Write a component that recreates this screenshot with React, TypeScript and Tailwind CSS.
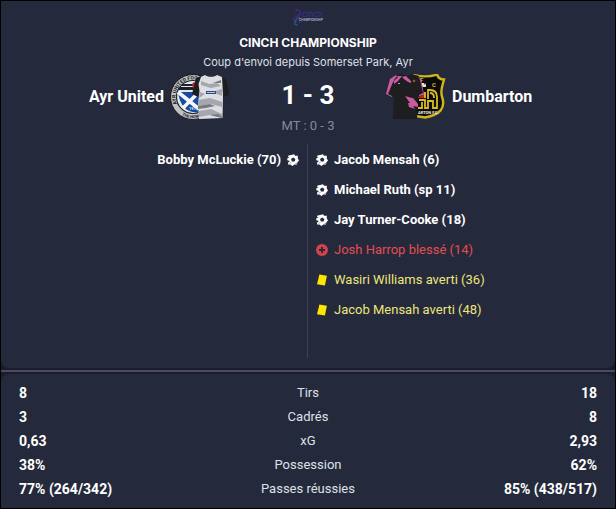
import React from 'react';

type EventKind = 'goal' | 'injury' | 'booking';

interface MatchEvent {
  kind: EventKind;
  label: string;
}

const homeEvents: MatchEvent[] = [{ kind: 'goal', label: 'Bobby McLuckie (70)' }];

const awayEvents: MatchEvent[] = [
  { kind: 'goal', label: 'Jacob Mensah (6)' },
  { kind: 'goal', label: 'Michael Ruth (sp 11)' },
  { kind: 'goal', label: 'Jay Turner-Cooke (18)' },
  { kind: 'injury', label: 'Josh Harrop blessé (14)' },
  { kind: 'booking', label: 'Wasiri Williams averti (36)' },
  { kind: 'booking', label: 'Jacob Mensah averti (48)' },
];

const stats = [
  { label: 'Tirs', home: '8', away: '18' },
  { label: 'Cadrés', home: '3', away: '8' },
  { label: 'xG', home: '0,63', away: '2,93' },
  { label: 'Possession', home: '38%', away: '62%' },
  { label: 'Passes réussies', home: '77% (264/342)', away: '85% (438/517)' },
];

const eventStyles: Record<EventKind, string> = {
  goal: 'font-bold text-white',
  injury: 'text-[#e84c52]',
  booking: 'text-[#ece67c]',
};

const EventIcon: React.FC<{ kind: EventKind }> = ({ kind }) => {
  if (kind === 'goal') {
    return (
      <svg viewBox="0 0 12 12" className="size-3 shrink-0" aria-hidden="true">
        <path
          fill="#fff"
          d="M4.2 1 7 .3 8 1.8 10.8 1.8 10.8 4.5 12 6.5 10.3 8.5 10 10.5 7.3 10.6 5.5 12 3.3 10.6 1 10.5 1.3 8.3 3 7 .3 6.2.3 4.3 2.6 3.6 1 3 1.5 1.5Z"
        />
        <path fill="#24293b" d="M6.2 3.4 8.4 5 7.6 7.6H4.9L4 5Z" />
        <path stroke="#24293b" strokeWidth=".8" d="M3 9.4 4 8.4M8.8 9.9 9.8 8.9" />
      </svg>
    );
  }
  if (kind === 'injury') {
    return (
      <svg viewBox="0 0 12 12" className="size-3 shrink-0" aria-hidden="true">
        <circle cx="6" cy="6" r="6" fill="#d2444a" />
        <path stroke="#24293b" strokeWidth="1.8" d="M6 3v6M3 6h6" />
      </svg>
    );
  }
  return (
    <svg viewBox="0 0 12 12" className="size-3 shrink-0" aria-hidden="true">
      <path fill="#ffe600" d="M3.4.6 10.9 1.7 8.9 11.5 1 10.3Z" />
    </svg>
  );
};

const LeagueLogo = () => (
  <svg viewBox="0 0 34 18" className="h-[18px] w-[34px]" role="img" aria-label="cinch Championship">
    <path fill="none" stroke="#43277f" strokeWidth="1.6" d="M4 2C7-.5 10 2 9 5 7 8 3 8 2 10.5" />
    <path fill="none" stroke="#3b2a72" strokeWidth="1.2" d="M1.5 10c2 4 6 2 9.5 3.5" />
    <path fill="none" stroke="#206478" strokeWidth="1.2" d="M9 8C6 9 3 12 4 15.5l3 .5" />
    <text x="11" y="8" fontSize="8" className="fill-[#43309a]">cinch</text>
    <text x="8" y="12" fontSize="3" className="fill-[#a3a9c6] font-bold">CHAMPIONSHIP</text>
  </svg>
);

const AyrUnitedBadge = () => (
  <svg viewBox="0 0 60 45" className="h-[45px] w-[60px] shrink-0" role="img" aria-label="Ayr United">
    <defs>
      <path id="ayr-top" d="M7 30A17.5 17.5 0 1 1 40.500 22" />
      <path id="ayr-bottom" d="M12 41A22 22 0 0 0 36 40" />
    </defs>
    <circle cx="23" cy="23" r="22.5" fill="#bfc1c3" stroke="#15171c" />
    <circle cx="23" cy="23" r="16.5" fill="#e6e7e8" stroke="#22252b" strokeWidth="1.2" />
    <text fontSize="5" className="fill-[#16181d] font-bold">
      <textPath href="#ayr-top">AYR UNITED FOOTBALL</textPath>
    </text>
    <text fontSize="4" className="fill-[#16181d] font-bold">
      <textPath href="#ayr-bottom">THE HONEST</textPath>
    </text>
    <path fill="#202126" d="M12 10h14v2H11zM9 13h16v3H8z" />
    <path fill="#b92330" d="m22 10 2-2 3 2v4h-4z" />
    <path fill="#174aa0" d="M8 18h22v20c-12 2-20-5-22-20Z" />
    <path stroke="#f4f7fb" strokeWidth="3.6" d="M8 18 29 35M29 18 13 34" />
    <text x="19" y="36" fontSize="4" className="fill-[#dce6f5] font-bold">1910</text>
    <path fill="#1d1e22" d="M31 2 26 4 22 20l6 3 5-9ZM49 2l7 3 3.500 16L52 23l-3-10Z" />
    <path fill="#dcdee2" d="m31 3 4-2c3 2 9 2 12 0l5 2 1 18-.5 23L29 45l-1-14 1.5-14-1-7Z" />
    <path
      fill="#a4a7ac"
      d="m31 7 8 3 8-1 4 3-10 2-10-3ZM28 26l12-2 12 4v5l-11-3-13 2ZM42 18l10-3v7ZM29 37l12-2 11 5v4l-12-3-11 2ZM30 18l5 2-6 4Z"
    />
    <path fill="#777b81" d="m28 32 12-2 5 2-9 2-8 1ZM43 9l8-3v3ZM40 41l8-1 4 3v1Z" />
    <path fill="#2c2e33" d="M35 .5h12c-3 3-9 3-12 0Z" />
    <path fill="#27498f" d="M36 17h10v3H36z" />
    <path fill="#c5c7ca" d="M37 18h8v1h-8z" />
  </svg>
);

const DumbartonBadge = () => (
  <svg viewBox="0 0 60 45" className="h-[45px] w-[60px] shrink-0" role="img" aria-label="Dumbarton">
    <path
      fill="#0b0b0b"
      stroke="#cdb51b"
      strokeWidth="2.4"
      d="M28 1c8 2 15 2 23-.5 1 3 4 5 7 5-2 8-4 11-2 17 4 12-2 18-17 21l-13-2Z"
    />
    <text x="34" y="8" fontSize="6" className="fill-[#d5bd27] font-bold">F</text>
    <text x="46" y="13" fontSize="6" className="fill-[#d5bd27] font-bold">C</text>
    <path fill="#e5e2d4" d="M36 9h2l1 2 1-2v4h-4z" />
    <path fill="#b9212d" d="M32 18h8v6h-8z" />
    <path
      fill="none"
      stroke="#d8bb20"
      strokeWidth="1.8"
      d="M33 26h6v8h3v-7h5v7h4V23c0-5-3-7-7-7h-2v9M44 19c3 0 4 2 4 5M36 28v6h-4M39 18v6"
    />
    <text x="32" y="40" fontSize="4" className="fill-[#f2f2ee] font-bold">ARTON F.C.</text>
    <path fill="#1e1d20" d="m10 1 5-1c3 2 8 2 11 0l7 2 4 13 1 6-6 2-1 22H7l1-22-7-2L4 5Z" />
    <path
      fill="#c95aa2"
      d="M10 1 4 5 0 20l6 3v-1l-4-2L7 8l5-5ZM11 2l5 0-4 5-4 3 0-4ZM16 3l4-1 5 5 0 2-3-1-4-3ZM32 2l2 4L37 19l-4 2v1l5-1L35 5ZM19 22l7 2 1 0 5 6v3l-5-1 2 3-6-2-1-4 2 0Z"
    />
    <path fill="#a8a6aa" d="M12 9h2v1h-2z" />
    <circle cx="28" cy="7" r="1.3" fill="#756329" />
  </svg>
);

const EventList: React.FC<{ events: MatchEvent[]; side: 'home' | 'away' }> = ({ events, side }) => (
  <ul className={`w-1/2 px-2 pt-px ${side === 'home' ? 'border-r border-[#3c4254]' : ''}`}>
    {events.map((event) => (
      <li
        key={event.label}
        className={`flex h-[30px] items-center gap-[6px] ${side === 'home' ? 'flex-row-reverse' : ''} ${eventStyles[event.kind]}`}
      >
        <EventIcon kind={event.kind} />
        <span>{event.label}</span>
      </li>
    ))}
  </ul>
);

export default function App() {
  return (
    <main className="flex min-h-screen flex-col gap-[2px] border border-black bg-[#1b1d2d] font-['Roboto',sans-serif] text-[13px] leading-5 text-[#dfe1e8]">
      <section className="flex-1 rounded-b-lg bg-[#24293b] pb-2 pt-2">
        <header className="flex flex-col items-center font-['Inter',sans-serif]">
          <LeagueLogo />
          <h1 className="mt-2 text-[12px] font-bold leading-4 text-white">CINCH CHAMPIONSHIP</h1>
          <p className="mt-[3px] text-[11px] leading-4">Coup d'envoi depuis Somerset Park, Ayr</p>
        </header>

        <div className="mt-1 grid grid-cols-[1fr_156px_1fr] items-center text-[16px] font-bold text-white">
          <div className="flex items-center justify-end gap-[6px]">
            <h2>Ayr United</h2>
            <AyrUnitedBadge />
          </div>
          <p className="pb-1 text-center text-[26px] leading-8">1 - 3</p>
          <div className="flex items-center gap-[6px]">
            <DumbartonBadge />
            <h2>Dumbarton</h2>
          </div>
        </div>
        <p className="-mt-[3px] text-center text-[#878b98]">MT : 0 - 3</p>

        <div className="mt-2 flex min-h-[214px]">
          <EventList events={homeEvents} side="home" />
          <EventList events={awayEvents} side="away" />
        </div>
      </section>

      <hr className="h-[2px] border-0 bg-[#4a4b61]" />

      <section className="rounded-t-lg bg-[#24293b] px-[18px] pb-[7px] pt-[7px]">
        <table className="w-full table-fixed">
          <tbody>
            {stats.map((row) => (
              <tr key={row.label} className="h-6">
                <td className="p-0 text-left text-[14px] font-bold text-white">{row.home}</td>
                <th scope="row" className="p-0 text-center font-normal">{row.label}</th>
                <td className="p-0 text-right text-[14px] font-bold text-white">{row.away}</td>
              </tr>
            ))}
          </tbody>
        </table>
      </section>
    </main>
  );
}
